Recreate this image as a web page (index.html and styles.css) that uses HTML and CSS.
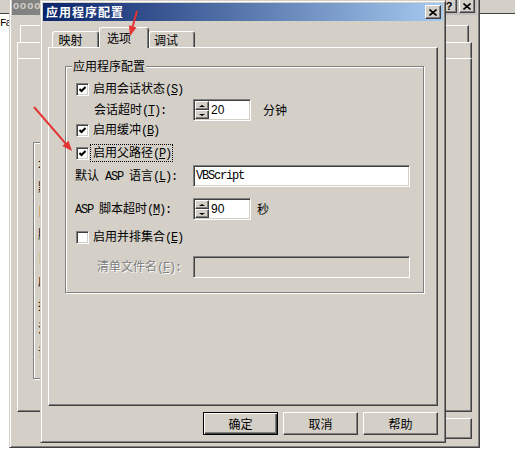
FILE: index.html
```html
<!DOCTYPE html>
<html lang="zh-CN">
<head>
<meta charset="utf-8">
<title>应用程序配置</title>
<link rel="stylesheet" href="styles.css">
</head>
<body>
<div class="desk">
  <div class="backstrip"></div>
  <div class="bgtext">Fa</div>

  <div class="win parent">
    <div class="ptitle">
      <span class="ptitle-text">oooo</span>
      <span class="capbtns">
        <span class="capbtn help">?</span>
        <span class="capbtn"><svg width="8" height="7" viewBox="0 0 8 7"><path d="M0.5 0.5 L7.5 6.5 M7.5 0.5 L0.5 6.5" stroke="#000" stroke-width="1.6" fill="none"/></svg></span>
      </span>
    </div>
    <div class="ptabrow ptabrow1"></div>
    <div class="ptabrow ptabrow2"></div>
    <div class="ppanel">
      <div class="pgroup">
        <div class="pline">本</div>
        <div class="pline">默</div>
        <div class="pline">目</div>
        <div class="pline">脚</div>
        <div class="pline">日</div>
        <div class="pline">应</div>
        <div class="pline">执</div>
        <div class="pline">池</div>
        <div class="pline">读</div>
      </div>
    </div>
    <div class="pbtns"><span class="pbtn">应用</span></div>
  </div>

  <div class="win dlg">
    <div class="title">
      <span class="title-text">应用程序配置</span>
      <span class="capbtn"><svg width="8" height="7" viewBox="0 0 8 7"><path d="M0.5 0.5 L7.5 6.5 M7.5 0.5 L0.5 6.5" stroke="#000" stroke-width="1.6" fill="none"/></svg></span>
    </div>
    <div class="tabs">
      <span class="tab t1">映射</span>
      <span class="tab t2">选项</span>
      <span class="tab t3">调试</span>
    </div>
    <div class="panel">
      <div class="group">
        <span class="legend">应用程序配置</span>

        <div class="row ck mt14">
          <span class="chk"><svg width="7" height="7" viewBox="0 0 7 7"><polyline points="0.5,3 2.5,5 6.5,1" stroke="#000" stroke-width="2" fill="none"/></svg></span>
          <span>启用会话状态<span class="en">(<u>S</u>)</span></span>
        </div>

        <div class="row fld mt2">
          <span class="lab i28">会话超时<span class="en">(<u>T</u>):</span></span>
          <span class="spin">
            <span class="ud"><span class="udb"><span class="tri-up"></span></span><span class="udb"><span class="tri-dn"></span></span></span>
            <span class="val">20</span>
          </span>
          <span class="unit">分钟</span>
        </div>

        <div class="row ck mt1">
          <span class="chk"><svg width="7" height="7" viewBox="0 0 7 7"><polyline points="0.5,3 2.5,5 6.5,1" stroke="#000" stroke-width="2" fill="none"/></svg></span>
          <span>启用缓冲<span class="en">(<u>B</u>)</span></span>
        </div>

        <div class="row ck mt7">
          <span class="chk f"><svg width="7" height="7" viewBox="0 0 7 7"><polyline points="0.5,3 2.5,5 6.5,1" stroke="#000" stroke-width="2" fill="none"/></svg></span>
          <span class="focus">启用父路径<span class="en">(<u>P</u>)</span></span>
        </div>

        <div class="row fld mt4">
          <span class="lab i9">默认<span class="en"> ASP </span>语言<span class="en">(<u>L</u>):</span></span>
          <span class="edit"><span class="mono">VBScript</span></span>
        </div>

        <div class="row fld mt11">
          <span class="lab i9"><span class="en">ASP </span>脚本超时<span class="en">(<u>M</u>):</span></span>
          <span class="spin">
            <span class="ud"><span class="udb"><span class="tri-up"></span></span><span class="udb"><span class="tri-dn"></span></span></span>
            <span class="val">90</span>
          </span>
          <span class="unit s">秒</span>
        </div>

        <div class="row ck mt9">
          <span class="chk"></span>
          <span>启用并排集合<span class="en">(<u>E</u>)</span></span>
        </div>

        <div class="row fld mt11">
          <span class="lab i31 dis-t">清单文件名<span class="en">(<u>F</u>):</span></span>
          <span class="edit dis"></span>
        </div>
      </div>
    </div>
    <div class="btns">
      <span class="btn def">确定</span>
      <span class="btn">取消</span>
      <span class="btn">帮助</span>
    </div>
  </div>

  <svg class="arrows" width="515" height="463" viewBox="0 0 515 463">
    <line x1="137" y1="11" x2="132.7" y2="26.4" stroke="#e53333" stroke-width="2"/>
    <polygon points="130,36 136.5,27.5 128.9,25.3" fill="#e53333"/>
    <line x1="34" y1="107" x2="65.5" y2="143.4" stroke="#e53333" stroke-width="2"/>
    <polygon points="72,151 62.4,146 68.5,140.8" fill="#e53333"/>
  </svg>
</div>
</body>
</html>
```

FILE: styles.css
```css
* { box-sizing: border-box; margin: 0; padding: 0; }
html, body { width: 515px; height: 463px; overflow: hidden; background: #fff; }
body {
  font-family: "Noto Sans CJK SC", "Noto Sans", sans-serif;
  font-size: 12px;
  line-height: 14px;
  color: #000;
}
.desk { position: relative; width: 515px; height: 463px; overflow: hidden; }

.backstrip { height: 14px; background: #d4d0c8; border-bottom: 1px solid #404040; }
.bgtext { position: absolute; left: 0; top: 17px; font: 11px/12px "Liberation Mono", monospace; letter-spacing: -1px; }

.win {
  position: absolute;
  display: flex;
  flex-direction: column;
  background: #d4d0c8;
  border: 1px solid;
  border-color: #d4d0c8 #404040 #404040 #d4d0c8;
  box-shadow: inset 1px 1px #fff, inset -1px -1px #808080;
  padding: 2px;
}
.parent { left: 9px; top: -6px; width: 471px; height: 454px; z-index: 1; }
.dlg { left: 40px; top: 0; width: 406px; height: 443px; z-index: 2; }

/* caption buttons */
.capbtn {
  width: 16px; height: 14px; flex: none;
  background: #d4d0c8;
  border: 1px solid;
  border-color: #fff #404040 #404040 #fff;
  box-shadow: inset -1px -1px #808080;
  display: flex; align-items: center; justify-content: center;
}
.capbtns { display: flex; }
.help { font: bold 11px/12px "Liberation Sans", sans-serif; margin-right: 2px; }

/* parent window */
.ptitle {
  height: 18px; flex: none;
  background: linear-gradient(to right, #808080, #c0c0c0);
  display: flex; align-items: center; justify-content: space-between;
  padding: 0 2px 0 1px;
}
.ptitle-text { color: #d4d0c8; font: bold 10px/12px "Liberation Sans", sans-serif; letter-spacing: 1px; }
.ptabrow {
  flex: none;
  border-top: 1px solid #fff;
  border-left: 1px solid #fff;
  border-right: 1px solid #404040;
  box-shadow: inset -1px 0 #808080;
}
.ptabrow1 { height: 17px; margin: 10px 8px 0 8px; }
.ptabrow2 { height: 16px; margin: 0 5px; }
.ppanel {
  flex: none; height: 354px; margin: 0 5px;
  border: 1px solid;
  border-color: #fff #404040 #404040 #fff;
  box-shadow: inset -1px -1px #808080;
  padding: 83px 0 0 15px;
}
.pgroup {
  width: 300px; height: 237px;
  border: 1px solid #808080;
  box-shadow: inset 1px 1px #fff, 1px 1px #fff;
  padding: 9px 0 0 4px;
}
.pline { height: 23.5px; display: flex; align-items: center; }
.pbtns { display: flex; justify-content: flex-end; padding-right: 5px; margin-top: 6px; }
.pbtn {
  width: 75px; height: 21px;
  display: flex; align-items: center; justify-content: center;
  border: 1px solid;
  border-color: #fff #404040 #404040 #fff;
  box-shadow: inset -1px -1px #808080;
}

/* dialog */
.title {
  height: 18px; flex: none;
  background: linear-gradient(to right, #0a246a, #a6caf0);
  display: flex; align-items: center; justify-content: space-between;
  padding: 0 2px 0 3px;
}
.title-text { color: #fff; font-weight: bold; letter-spacing: 1px; }

.tabs { flex: none; height: 26px; display: flex; align-items: flex-end; padding-left: 9px; }
.tab {
  height: 16px;
  display: flex; justify-content: center; align-items: flex-start;
  padding-top: 1px; padding-right: 10px;
  background: #d4d0c8;
  border-top: 1px solid #fff;
  border-left: 1px solid #fff;
  border-right: 1px solid #404040;
  box-shadow: inset -1px 0 #808080;
  border-radius: 3px 3px 0 0;
}
.t1 { width: 47px; }
.t2 { width: 50px; height: 21px; margin-bottom: -1px; position: relative; z-index: 1; padding-top: 3px; }
.t3 { width: 46px; padding-right: 12px; }

.panel {
  flex: none; height: 359px; margin: 0 5px;
  border: 1px solid;
  border-color: #fff #404040 #404040 #fff;
  box-shadow: inset -1px -1px #808080;
  padding: 18px 0 0 16px;
}
.group {
  position: relative;
  width: 359px; height: 227px;
  border: 1px solid #808080;
  box-shadow: inset 1px 1px #fff, 1px 1px #fff;
  display: flex; flex-direction: column;
}
.legend { position: absolute; left: 6px; top: -8px; padding: 0 1px; background: #d4d0c8; }

.row { display: flex; align-items: center; flex: none; }
.ck { height: 16px; padding-left: 10px; }
.fld { height: 22px; }
.mt1 { margin-top: 1px; }
.mt2 { margin-top: 2px; }
.mt4 { margin-top: 4px; }
.mt7 { margin-top: 7px; }
.mt9 { margin-top: 9px; }
.mt11 { margin-top: 11px; }
.mt14 { margin-top: 14px; }

.lab { width: 127px; flex: none; white-space: pre; }
.i28 { padding-left: 28px; }
.i9 { padding-left: 9px; }
.i31 { padding-left: 31px; }
.en { font-family: "Liberation Mono", monospace; font-size: 12px; letter-spacing: -1.2px; white-space: pre; }
.dis-t { color: #808080; text-shadow: 1px 1px 0 #fff; }

.chk {
  width: 13px; height: 13px; flex: none; margin-right: 4px;
  border: 1px solid;
  border-color: #808080 #fff #fff #808080;
  box-shadow: inset 1px 1px #404040, inset -1px -1px #d4d0c8;
  background: #fff;
  display: flex; align-items: center; justify-content: center;
}
.chk.f { margin-right: 1px; }
.focus { border: 1px dotted #000; padding: 0 1px 0 2px; }

.spin {
  width: 58px; height: 22px; flex: none;
  display: flex;
  border: 1px solid;
  border-color: #808080 #fff #fff #808080;
  box-shadow: inset 1px 1px #404040, inset -1px -1px #d4d0c8;
  padding: 1px;
  background: #fff;
}
.ud { width: 14px; display: flex; flex-direction: column; }
.udb {
  flex: 1;
  background: #d4d0c8;
  border: 1px solid;
  border-color: #fff #404040 #404040 #fff;
  box-shadow: inset -1px -1px #808080;
  display: flex; align-items: center; justify-content: center;
}
.tri-up { width: 0; height: 0; border-left: 3px solid transparent; border-right: 3px solid transparent; border-bottom: 2px solid #000; }
.tri-dn { width: 0; height: 0; border-left: 3px solid transparent; border-right: 3px solid transparent; border-top: 2px solid #000; }
.val { padding-left: 2px; display: flex; align-items: center; font: 12px/14px "Liberation Sans", sans-serif; }
.unit { margin-left: 12px; }
.unit.s { margin-left: 6px; }

.edit {
  width: 217px; height: 22px; flex: none;
  border: 1px solid;
  border-color: #808080 #fff #fff #808080;
  box-shadow: inset 1px 1px #404040, inset -1px -1px #d4d0c8;
  background: #fff;
  padding-left: 2px;
  display: flex; align-items: center;
}
.edit.dis { background: #d4d0c8; }
.mono { font: 12px/14px "Liberation Mono", monospace; letter-spacing: -1.2px; }

.btns { display: flex; justify-content: flex-end; gap: 5px; margin-top: 6px; padding-right: 5px; }
.btn {
  width: 75px; height: 23px;
  display: flex; align-items: center; justify-content: center;
  background: #d4d0c8;
  border: 1px solid;
  border-color: #fff #404040 #404040 #fff;
  box-shadow: inset -1px -1px #808080;
}
.btn.def {
  border-color: #000;
  box-shadow: inset 1px 1px #fff, inset -1px -1px #404040, inset -2px -2px #808080;
}

.arrows { position: absolute; left: 0; top: 0; z-index: 5; }
```
